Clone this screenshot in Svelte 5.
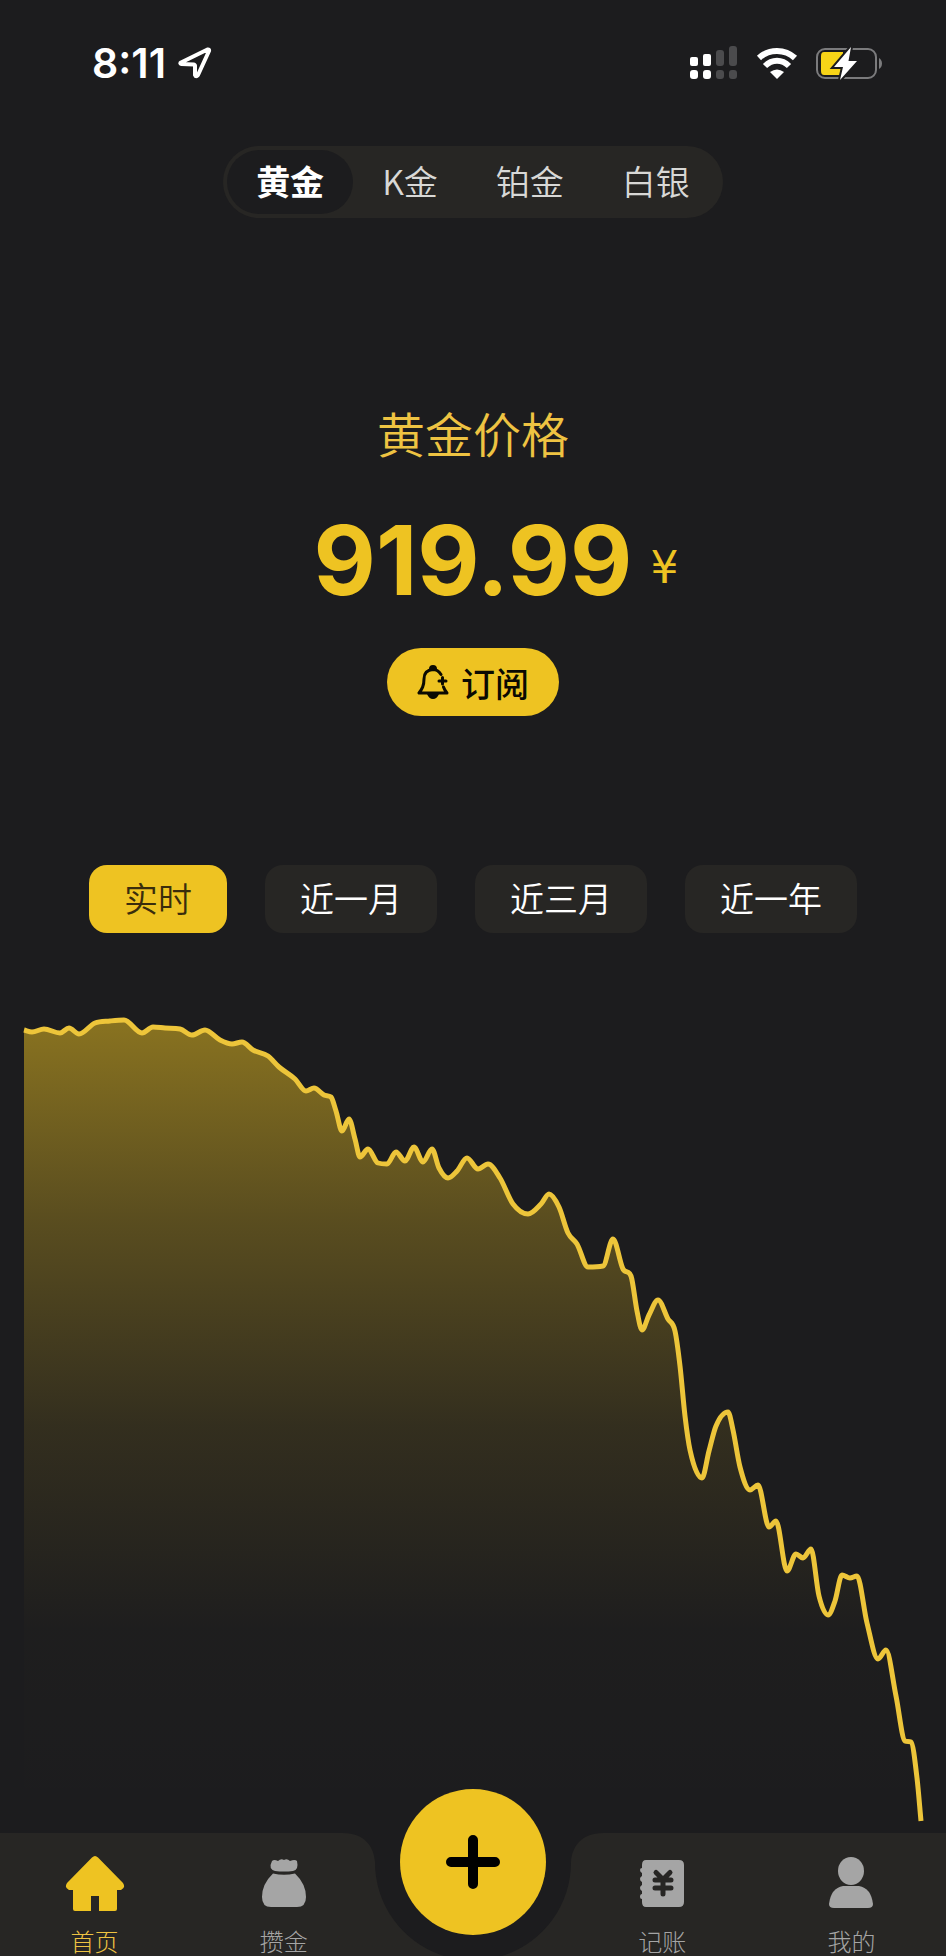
<script>
	const metals = ['黄金', 'K金', '铂金', '白银'];
	const periods = ['实时', '近一月', '近三月', '近一年'];

	let metal = '黄金';
	let period = '实时';
	let page = 'home';

	// Size of the chart's own coordinate system
	const chartWidth = 898;
	const chartHeight = 820;

	// Price samples as [x, y] in chart units, y grows downwards
	const points = [
		[0, 17], [8, 19], [20, 16], [36, 20], [45, 15], [55, 21], [71, 10], [86, 8], [100, 7],
		[118, 20], [129, 14], [141, 15], [156, 16], [168, 22], [181, 17], [196, 27], [208, 31],
		[218, 29], [229, 37], [244, 43], [255, 54], [271, 66], [282, 78], [290, 75], [300, 82],
		[307, 84], [312, 98], [318, 118], [325, 106], [331, 126], [336, 144], [344, 136],
		[354, 150], [363, 151], [372, 139], [381, 148], [390, 134], [399, 149], [408, 136],
		[415, 155], [424, 165], [433, 158], [443, 145], [454, 156], [464, 151], [476, 165],
		[489, 191], [504, 201], [517, 191], [525, 181], [535, 194], [544, 220], [553, 231],
		[564, 254], [579, 253], [589, 226], [599, 256], [607, 263], [613, 298], [618, 317],
		[625, 302], [634, 287], [644, 306], [651, 318], [656, 353], [661, 403], [666, 437],
		[678, 465], [685, 438], [692, 413], [704, 399], [709, 417], [716, 454], [726, 477],
		[734, 472], [745, 514], [752, 508], [763, 558], [772, 541], [779, 545], [787, 536],
		[795, 583], [804, 602], [811, 588], [818, 562], [826, 565], [833, 563], [843, 610],
		[854, 646], [862, 637], [872, 683], [881, 728], [887, 729], [893, 765], [897, 808]
	];

	// Slope at a point, flat on every peak and valley
	function slope(i) {
		if (i === 0 || i === points.length - 1) return null;
		const [x0, y0] = points[i - 1];
		const [x1, y1] = points[i];
		const [x2, y2] = points[i + 1];
		const before = (y1 - y0) / (x1 - x0);
		const after = (y2 - y1) / (x2 - x1);
		if (before * after <= 0) return 0;
		const size = Math.min(Math.abs(before + after) / 2, 3 * Math.abs(before), 3 * Math.abs(after));
		return Math.sign(before) * size;
	}

	// Build a smooth line through all the points
	function buildLine() {
		let d = `M${points[0][0]} ${points[0][1]}`;
		for (let i = 1; i < points.length; i++) {
			const [x0, y0] = points[i - 1];
			const [x1, y1] = points[i];
			const third = (x1 - x0) / 3;
			const straight = (y1 - y0) / (x1 - x0);
			const m0 = slope(i - 1) ?? straight;
			const m1 = slope(i) ?? straight;
			d += `C${x0 + third} ${y0 + m0 * third} ${x1 - third} ${y1 - m1 * third} ${x1} ${y1}`;
		}
		return d;
	}

	const line = buildLine();
	const area = `${line}V${chartHeight}H0Z`;
</script>

<div class="app">
	<header class="status">
		<div class="status__left">
			<span class="status__time">8:11</span>
			<svg class="status__location" viewBox="0 0 34 32" aria-hidden="true">
				<path d="M3 15.5 L29.5 2.5 Q31.5 2 31 4 L20 28 Q18 30.500 17 28 V18.500 L16 17.500 L3.500 17 Q1.500 16.500 3 15.500Z" />
			</svg>
		</div>
		<div class="status__right">
			<svg class="status__signal" viewBox="0 0 48 34" aria-hidden="true">
				<g fill="#fff">
					<rect x="0" y="11" width="8" height="9" rx="2" />
					<rect x="13" y="8" width="8" height="12" rx="2" />
					<rect x="0" y="24" width="8" height="9" rx="3" />
					<rect x="13" y="24" width="8" height="9" rx="3" />
				</g>
				<g fill="#4b4b4d">
					<rect x="26" y="4" width="8" height="16" rx="3" />
					<rect x="39" y="0" width="8" height="20" rx="3" />
					<rect x="26" y="24" width="8" height="9" rx="3" />
					<rect x="39" y="24" width="8" height="9" rx="3" />
				</g>
			</svg>
			<svg class="status__wifi" viewBox="0 0 42 32" aria-hidden="true">
				<path d="M3 11 C13 1.500 29 1.500 39 11" fill="none" stroke="#fff" stroke-width="6" />
				<path d="M9 19 C16 12 26 12 33 19" fill="none" stroke="#fff" stroke-width="6" />
				<path d="M14 25 Q21 20 28 25 L21 32Z" fill="#fff" />
			</svg>
			<svg class="status__battery" viewBox="0 0 68 34" aria-hidden="true">
				<rect x="1" y="3" width="59" height="29" rx="8" fill="none" stroke="#7b7b7d" stroke-width="2" />
				<path d="M63 12 Q66 14 66 17.500 Q66 21 63 23Z" fill="#7b7b7d" />
				<path d="M8 6 H27 V29 H8 Q5 29 5 25 V10 Q5 6 8 6Z" fill="#f7d417" />
				<path d="M35 1 L18 21 H27 L24 34 L41 15 H32.500Z" fill="#fff" stroke="#1c1c1e" stroke-width="4" paint-order="stroke" />
			</svg>
		</div>
	</header>

	<main>
		<div class="metals" role="group" aria-label="贵金属">
			{#each metals as name}
				<button
					class="metals__item"
					class:active={metal === name}
					aria-pressed={metal === name}
					on:click={() => (metal = name)}
				>
					{name}
				</button>
			{/each}
		</div>

		<section class="quote">
			<h1 class="quote__title">{metal}价格</h1>
			<p class="quote__price">
				<span class="quote__value">919.99</span>
				<span class="quote__unit">¥</span>
			</p>
			<button class="subscribe">
				<svg class="subscribe__icon" viewBox="0 0 32 36" aria-hidden="true">
					<g fill="none" stroke="#0b0a02" stroke-width="3" stroke-linecap="round" stroke-linejoin="round">
						<path d="M24 10.500 Q21 5.500 16 5.500 Q7 6 7 15 C7 22 5 25 2 29 H30 Q27.500 26 26.500 23" />
						<path d="M25.500 13.500 V20 M22 17 H29" />
					</g>
					<path d="M12 5 Q12 1 16 1 Q20 1 20 5Z M10 30 H22 Q20 35 16 35 Q12 35 10 30Z" fill="#0b0a02" />
				</svg>
				订阅
			</button>
		</section>

		<div class="periods" role="group" aria-label="时间范围">
			{#each periods as name}
				<button
					class="periods__item"
					class:active={period === name}
					aria-pressed={period === name}
					on:click={() => (period = name)}
				>
					{name}
				</button>
			{/each}
		</div>

		<div class="chart">
			<svg
				viewBox="0 0 {chartWidth} {chartHeight}"
				preserveAspectRatio="none"
				role="img"
				aria-label="价格走势"
			>
				<defs>
					<linearGradient id="fade" x1="0" y1="0" x2="0" y2="1">
						<stop offset="0" stop-color="#eec322" stop-opacity="0.52" />
						<stop offset="0.25" stop-color="#eec322" stop-opacity="0.29" />
						<stop offset="0.5" stop-color="#eec322" stop-opacity="0.11" />
						<stop offset="0.75" stop-color="#eec322" stop-opacity="0.01" />
						<stop offset="1" stop-color="#eec322" stop-opacity="0" />
					</linearGradient>
				</defs>
				<path d={area} fill="url(#fade)" />
				<path class="chart__line" d={line} />
			</svg>
		</div>
	</main>

	<nav class="tabbar">
		<!-- Cut-out behind the add button -->
		<svg class="tabbar__notch" viewBox="0 0 260 124" aria-hidden="true">
			<path d="M0 0 C22 0 31 14 32 29 A98 98 0 0 0 98 122 L104 124 H156 L162 122 A98 98 0 0 0 228 29 C229 14 238 0 260 0Z" fill="#1c1c1e" />
		</svg>

		<a class="tabbar__item" class:active={page === 'home'} href="#home" on:click={() => (page = 'home')}>
			<svg viewBox="0 0 60 56" aria-hidden="true">
				<path d="M27 2.500 Q30 -0.500 33 2.500 L58 28 Q61 33 56 35 H52 V54 Q52 56 50 56 H34 V41 H26 V56 H10 Q8 56 8 54 V35 H4 Q-1 33 2 28Z" />
			</svg>
			<span>首页</span>
		</a>
		<a class="tabbar__item" class:active={page === 'save'} href="#save" on:click={() => (page = 'save')}>
			<svg viewBox="0 0 60 56" aria-hidden="true">
				<path d="M18 6 Q20 4 24 6 Q27 3 30 5 Q33 3 36 6 Q41 4 43 6 Q45 15 39 16 Q30 17 21 16 Q14 14 18 6Z" />
				<path d="M19 18.500 Q30 21 41 18.500 Q52 29 52 42 Q52 52 43 52 H17 Q8 52 8 42 Q8 29 19 18.500Z" />
			</svg>
			<span>攒金</span>
		</a>
		<div class="tabbar__center">
			<button class="add" aria-label="添加">
				<svg viewBox="0 0 54 54" aria-hidden="true">
					<path d="M27 5 V49 M5 27 H49" />
				</svg>
			</button>
		</div>
		<a class="tabbar__item" class:active={page === 'ledger'} href="#ledger" on:click={() => (page = 'ledger')}>
			<svg viewBox="0 0 60 56" aria-hidden="true">
				<path d="M14 5 H47 Q52 5 52 10 V47 Q52 52 47 52 H14 Q10 52 10 47 V44 Q8 44 8 42 Q8 39 10 39 V36 Q8 35 8 33 Q8 31 10 30 V27 Q8 26 8 24 Q8 22 10 21 V18 Q8 17 8 15 Q8 13 10 13 V10 Q10 5 14 5Z" />
				<path class="ink" d="M24 17.500 L31 24.500 L38 17.500 M23 25 H39 M23 33 H39 M31 25 V39" />
			</svg>
			<span>记账</span>
		</a>
		<a class="tabbar__item" class:active={page === 'mine'} href="#mine" on:click={() => (page = 'mine')}>
			<svg viewBox="0 0 60 56" aria-hidden="true">
				<ellipse cx="30" cy="16" rx="13" ry="14" />
				<path d="M22 31 H38 Q50 33 52 49 Q52 53 47 53 H13 Q8 53 8 49 Q10 33 22 31Z" />
			</svg>
			<span>我的</span>
		</a>
	</nav>
</div>

<style>
	:global(body) {
		margin: 0;
		background: #1c1c1e;
	}
	.app {
		display: flex;
		flex-direction: column;
		min-height: 100vh;
		overflow: hidden;
		background: #1c1c1e;
		color: #fff;
		font-family: Inter, 'Noto Sans CJK SC', sans-serif;
	}
	button {
		border: 0;
		margin: 0;
		padding: 0;
		background: none;
		color: inherit;
		font-family: 'Noto Sans CJK SC', sans-serif;
		font-size: 34px;
		font-weight: 350;
		cursor: pointer;
	}
	svg {
		display: block;
	}

	/* Status bar */
	.status {
		display: flex;
		justify-content: space-between;
		align-items: center;
		padding: 38px 62px 38px 92px;
	}
	.status__left,
	.status__right {
		display: flex;
		align-items: center;
	}
	.status__left {
		gap: 12px;
	}
	.status__right {
		gap: 18px;
	}
	.status__time {
		font-size: 41px;
		font-weight: 600;
		line-height: 50px;
	}
	.status__location {
		width: 34px;
		height: 32px;
		fill: none;
		stroke: #fff;
		stroke-width: 4;
		stroke-linejoin: round;
	}
	.status__signal {
		width: 48px;
		height: 34px;
	}
	.status__wifi {
		width: 42px;
		height: 32px;
	}
	.status__battery {
		width: 68px;
		height: 34px;
	}

	main {
		flex: 1;
		display: flex;
		flex-direction: column;
		align-items: center;
		padding-top: 20px;
	}

	/* Metal switch */
	.metals {
		display: flex;
		padding: 4px;
		border-radius: 36px;
		background: #272624;
	}
	.metals__item {
		height: 64px;
		padding: 0 29px 3px;
		border-radius: 32px;
		color: #d8d8d6;
	}
	.metals__item.active {
		background: #1c1c1e;
		color: #fff;
		font-weight: 700;
	}

	/* Price */
	.quote {
		display: flex;
		flex-direction: column;
		align-items: center;
		width: 100%;
		padding-top: 182px;
	}
	.quote__title {
		margin: 0;
		color: #eec342;
		font-size: 48px;
		font-weight: 350;
		line-height: 72px;
	}
	.quote__price {
		display: grid;
		grid-template-columns: 1fr auto 1fr;
		align-items: center;
		column-gap: 18px;
		width: 100%;
		margin: 28px 0;
		color: #eec322;
		line-height: 104px;
	}
	.quote__value {
		grid-column: 2;
		font-size: 96px;
		font-weight: 700;
	}
	.quote__unit {
		padding-top: 16px;
		font-family: 'DejaVu Sans', sans-serif;
		font-size: 44px;
	}
	.subscribe {
		display: flex;
		align-items: center;
		gap: 12px;
		height: 68px;
		padding: 0 30px;
		border-radius: 34px;
		background: #eec322;
		color: #0b0a02;
		font-weight: 500;
	}
	.subscribe__icon {
		width: 32px;
		height: 36px;
	}

	/* Period switch */
	.periods {
		display: flex;
		gap: 38px;
		margin: 149px 0 80px;
	}
	.periods__item {
		height: 68px;
		padding: 0 35px 3px;
		border-radius: 18px;
		background: #272624;
		white-space: nowrap;
	}
	.periods__item.active {
		background: #eec322;
		color: #3a2d0c;
	}

	/* Chart */
	.chart {
		flex: 1;
		display: flex;
		align-self: stretch;
		min-height: 400px;
		margin: 0 24px;
	}
	.chart svg {
		flex: 1;
		width: 100%;
		min-height: 0;
		overflow: visible;
	}
	.chart__line {
		fill: none;
		stroke: #edc53a;
		stroke-width: 5;
		stroke-linejoin: round;
		vector-effect: non-scaling-stroke;
	}

	/* Bottom navigation */
	.tabbar {
		position: relative;
		display: grid;
		grid-template-columns: repeat(5, 1fr);
		background: #272624;
	}
	.tabbar__notch {
		position: absolute;
		top: 0;
		left: 50%;
		width: 260px;
		height: 124px;
		transform: translateX(-50%);
	}
	.tabbar__item {
		display: flex;
		flex-direction: column;
		align-items: center;
		gap: 18px;
		padding-top: 22px;
		color: #a5a5a5;
		fill: #a5a5a5;
		font-size: 24px;
		font-weight: 300;
		line-height: 28px;
		text-decoration: none;
	}
	.tabbar__item.active {
		color: #eec342;
		fill: #eec322;
	}
	.tabbar__item svg {
		width: 60px;
		height: 56px;
	}
	.ink {
		fill: none;
		stroke: #272624;
		stroke-width: 5;
		stroke-linecap: round;
	}
	.tabbar__center {
		position: relative;
	}
	.add {
		position: absolute;
		top: -44px;
		left: 50%;
		display: grid;
		place-items: center;
		width: 146px;
		height: 146px;
		border-radius: 50%;
		background: #eec322;
		transform: translateX(-50%);
	}
	.add svg {
		width: 54px;
		height: 54px;
		stroke: #000;
		stroke-width: 10;
		stroke-linecap: round;
	}
</style>
